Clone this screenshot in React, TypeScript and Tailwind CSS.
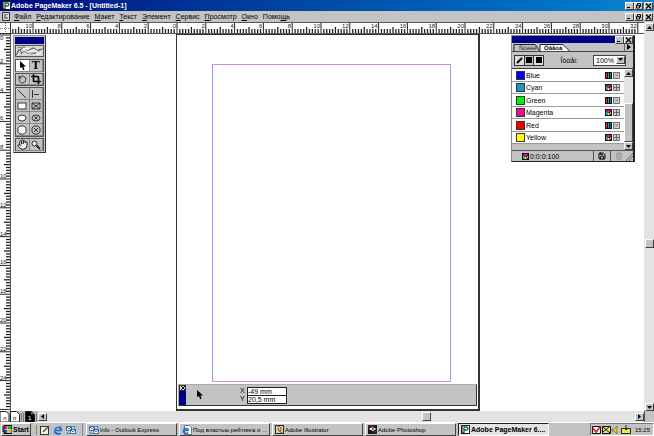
import React from 'react';
import { Hand, Crop, RotateCcw, Trash2, Save } from 'lucide-react';

const UNIT = 144 / 10;

const menuItems = ['Файл', 'Редактирование', 'Макет', 'Текст', 'Элемент', 'Сервис', 'Просмотр', 'Окно', 'Помощь'];

const swatches = [
    { name: 'Blue', color: '#0000f0', process: false },
    { name: 'Cyan', color: '#1899bd', process: true },
    { name: 'Green', color: '#00f010', process: false },
    { name: 'Magenta', color: '#f00890', process: true },
    { name: 'Red', color: '#f80000', process: false },
    { name: 'Yellow', color: '#ffff00', process: true },
];

const raised = 'bg-[#c3c3c3] border border-t-white border-l-white border-r-[#404040] border-b-[#404040]';

const WindowButton = ({ kind }: { kind: 'min' | 'restore' | 'close' }) => (
    <button aria-label={kind} className={`w-[9px] h-[8px] flex items-center justify-center ${raised}`}>
        <svg className="shrink-0" width="7" height="6" viewBox="0 0 7 6" fill="none" stroke="#000">
            {kind === 'min' && <path d="M1 4.5h3" />}
            {kind === 'restore' && <path d="M2.5 2V.5h3v3H4.5M1.5 2.5h3v2.5h-3z" strokeWidth=".9" />}
            {kind === 'close' && <path d="M1 .5l5 5M6 .5l-5 5" strokeWidth="1.1" />}
        </svg>
    </button>
);

const WindowButtons = () => (
    <div className="flex ml-auto pr-px">
        <WindowButton kind="min" />
        <WindowButton kind="restore" />
        <div className="w-px" />
        <WindowButton kind="close" />
    </div>
);

const TopRuler = () => {
    const ticks = [];
    for (let i = -57; i <= 160; i++) {
        const x = 166 + (i * UNIT) / 5;
        const major = i % 10 === 0;
        const len = major ? 11 : i % 5 === 0 ? 6 : 4;
        ticks.push(<path key={i} d={`M${x} ${10 - len}V10`} strokeWidth={major ? 1 : 1.3} />);
    }
    return (
        <svg className="block flex-1 min-w-0 h-[11px] bg-white" stroke="#222">
            {ticks}
            <path d="M0 10.5H2000" stroke="#555" />
            {Array.from({ length: 22 }, (_, k) => k * 2 - 10).map((n) => (
                <text key={n} x={165 + n * UNIT} y="5" textAnchor="end" fontSize="6" fill="#222" stroke="none">
                    {Math.abs(n)}
                </text>
            ))}
        </svg>
    );
};

const SideRuler = () => {
    const ticks = [];
    for (let i = 0; i <= 150; i++) {
        const y = 1 + (i * UNIT) / 5;
        const major = i % 10 === 0;
        const len = major ? 10 : i % 5 === 0 ? 6 : 4;
        ticks.push(<path key={i} d={`M${10 - len} ${y}H10`} strokeWidth={major ? 1 : 1.3} />);
    }
    return (
        <svg className="block w-[11px] h-full bg-white shrink-0" stroke="#222">
            {ticks}
            <path d="M10.5 0V2000" stroke="#555" />
            {Array.from({ length: 13 }, (_, k) => k * 2).map((n) => (
                <text key={n} x="0" y={n === 0 ? 6 : n * UNIT} fontSize="6" fill="#222" stroke="none">
                    {n}
                </text>
            ))}
        </svg>
    );
};

const lineTools = [
    { label: 'Line', shape: <path d="M2 1l8 8" /> },
    { label: 'Constrained line', shape: <path d="M2.5 1v8M4 5.5h5" /> },
    { label: 'Rectangle', shape: <rect x="2" y="2" width="8" height="6" fill="#fff" /> },
    { label: 'Rectangle frame', shape: <path d="M2 2h8v6H2zM2 2l8 6M10 2l-8 6" /> },
    { label: 'Ellipse', shape: <ellipse cx="6" cy="5" rx="4" ry="3" fill="#fff" /> },
    { label: 'Ellipse frame', shape: <><ellipse cx="6" cy="5" rx="4" ry="3" /><path d="M4.5 3.5l3 3M7.5 3.5l-3 3" /></> },
    { label: 'Polygon', shape: <path d="M4 1h4l2 2v4l-2 2H4L2 7V3z" fill="#fff" /> },
    { label: 'Polygon frame', shape: <path d="M4 1h4l2 2v4l-2 2H4L2 7V3zM4 3l4 4M8 3l-4 4" /> },
];

const Tool = ({ label, active, children }: { label: string; active?: boolean; children: React.ReactNode }) => (
    <button
        aria-label={label}
        className={`h-full flex items-center justify-center border-r border-b border-[#888] ${active ? 'bg-white' : 'bg-[#c3c3c3]'}`}
    >
        {children}
    </button>
);

const ToolRow = ({ children }: { children: React.ReactNode }) => (
    <div className="grid grid-cols-2 h-[13px] border border-[#555] mt-px">{children}</div>
);

const Arrow = () => (
    <svg width="7" height="10" viewBox="0 0 7 10">
        <path d="M1 0v7l2-1 1 3h1.5L4.5 5.5H7z" fill="#000" />
    </svg>
);

const Toolbox = () => (
    <div className="absolute left-[2px] top-px w-[33px] bg-[#c3c3c3] border border-[#999] border-r-[#333] border-b-[#333] p-px">
        <div className="h-[7px] bg-[#000080]" />
        <svg className="mt-px mb-[2px] block w-full h-[12px] bg-[#d8d8d8] border border-[#555]" viewBox="0 0 29 11" fill="none" stroke="#333">
            <path d="M0 10l3-6 3 3-2 4M4 4l5-2 4 3 6-3 4 3 6-2" />
            <path d="M5 8l4-2 3 2 5-1 4 1 6-4M1 2l8-1M16 9l8-2" stroke="#777" />
            <path d="M7 3h7M13 6h6M19 4l5 3M2 9l3 1M22 9l5-1" stroke="#fff" strokeWidth="1.5" />
        </svg>
        <ToolRow>
            <Tool label="Pointer" active><Arrow /></Tool>
            <Tool label="Text"><span className="font-['Liberation_Serif',serif] font-bold text-[12px] leading-[11px]">T</span></Tool>
        </ToolRow>
        <ToolRow>
            <Tool label="Rotate"><RotateCcw size={9} strokeDasharray="4 2" /></Tool>
            <Tool label="Crop"><Crop size={10} strokeWidth={4} /></Tool>
        </ToolRow>
        <div className="grid grid-cols-2 grid-rows-4 h-[50px] border border-[#555] mt-px">
            {lineTools.map((tool) => (
                <Tool key={tool.label} label={tool.label}>
                    <svg width="12" height="10" viewBox="0 0 12 10" fill="none" stroke="#222" strokeWidth=".9">
                        {tool.shape}
                    </svg>
                </Tool>
            ))}
        </div>
        <ToolRow>
            <Tool label="Hand"><Hand size={11} fill="#fff" /></Tool>
            <Tool label="Zoom">
                <svg width="10" height="10" viewBox="0 0 10 10" fill="#eee" stroke="#222">
                    <circle cx="3.5" cy="3.5" r="2.5" />
                    <path d="M5.5 5.5L9 9" strokeWidth="1.8" />
                </svg>
            </Tool>
        </ToolRow>
    </div>
);

const ModelIcon = ({ process }: { process: boolean }) => (
    <svg width="7" height="7" viewBox="0 0 7 7">
        <rect width="7" height="7" fill="#111" />
        {process ? (
            <>
                <path d="M1 1h5L3.5 4z" fill="#f0a" />
                <path d="M1 2l2 2-2 2z" fill="#0cf" />
                <path d="M3 4h1l1 2H2z" fill="#ff0" />
                <path d="M6 2v3H5z" fill="#fff" />
            </>
        ) : (
            <>
                <path d="M1 1h1v5H1z" fill="#f22" />
                <path d="M3 1h1v5H3z" fill="#0c4" />
                <path d="M5 1h1v5H5z" fill="#25f" />
            </>
        )}
    </svg>
);

const KindIcon = ({ process }: { process: boolean }) => (
    <svg width="7" height="7" viewBox="0 0 7 7" fill="#ccc" stroke="#555" strokeWidth=".8">
        <rect x=".5" y=".5" width="6" height="6" />
        {process ? <path d="M.5 3.5h6M3.5 .5v6" /> : <path d="M2 2l3 3M5 2L2 5" strokeDasharray="1 1" />}
    </svg>
);

const ScrollButton = ({ dir }: { dir: 'up' | 'down' | 'left' | 'right' }) => (
    <button aria-label={`Scroll ${dir}`} className={`w-[9px] h-[8px] shrink-0 flex items-center justify-center ${raised}`}>
        <svg width="5" height="5" viewBox="0 0 5 5">
            {dir === 'up' && <path d="M0 4h5L2.5 1z" />}
            {dir === 'down' && <path d="M0 1h5L2.5 4z" />}
            {dir === 'left' && <path d="M4 0v5L1 2.5z" />}
            {dir === 'right' && <path d="M1 0v5l3-2.5z" />}
        </svg>
    </button>
);

const ColorPalette = () => (
    <div className="absolute right-[9px] top-px w-[124px] bg-[#c3c3c3] border border-[#888] border-r-[#222] border-b-[#222] border-r-2 text-[7px] leading-[9px]">
        <div className="h-[7px] bg-[#000080] flex justify-end">
            <WindowButton kind="min" />
            <WindowButton kind="close" />
        </div>
        <div className="h-[9px] flex items-stretch border-b border-[#444]">
            <svg className="flex-1 min-w-0 h-[8px]" fill="#c3c3c3" stroke="#222">
                <path d="M2 8V1.5h21l5 7" />
                <path d="M28 8V1.5h23l7 7" fill="#fff" />
                <text x="7" y="7" fontSize="6" fill="#222" stroke="none">Ñòèëè</text>
                <text x="32" y="7" fontSize="6" fontWeight="bold" fill="#000" stroke="none">Öâåòà</text>
            </svg>
            <button aria-label="Palette menu" className="w-[9px] flex items-center justify-center border-l border-[#666]">
                <svg width="4" height="6" viewBox="0 0 4 6"><path d="M0 0v6l4-3z" /></svg>
            </button>
        </div>
        <div className="h-[16px] flex items-center pl-[2px] pr-[7px]">
            <div className="flex h-[11px] border border-[#333]">
                <button aria-label="Stroke" className="w-[9px] flex items-center justify-center bg-[#ddd]">
                    <svg width="7" height="7" viewBox="0 0 7 7"><path d="M1 6l5-5" stroke="#000" strokeWidth="2" /></svg>
                </button>
                <button aria-label="Fill" className="w-[10px] flex items-center justify-center border-x border-[#333]"><span className="size-[6px] bg-black" /></button>
                <button aria-label="Both" className="w-[9px] flex items-center justify-center bg-[#ddd]"><span className="size-[6px] bg-black" /></button>
            </div>
            <label htmlFor="tint" className="ml-auto mr-[15px]">Îòòåí:</label>
            <div className="relative w-[33px] h-[11px]">
                <select id="tint" className="block appearance-none w-full h-[11px] bg-white border border-[#444] leading-[9px] pl-[2px]">
                    <option>100%</option>
                </select>
                <span className="absolute right-px top-px pointer-events-none flex"><ScrollButton dir="down" /></span>
            </div>
        </div>
        <div className="flex border-t border-[#333]">
            <ul className="flex-1 min-w-0 bg-white">
                {swatches.map((s) => (
                    <li key={s.name} className="flex items-center h-[12px] pl-[4px] pr-[4px] border-b border-[#999] odd:h-[13px]">
                        <span className="size-[9px] border border-[#333] mr-px" style={{ backgroundColor: s.color }} />
                        <span>{s.name}</span>
                        <span className="ml-auto flex gap-px">
                            <ModelIcon process={s.process} />
                            <KindIcon process={s.process} />
                        </span>
                    </li>
                ))}
                <li className="h-[6px] bg-[#c3c3c3]" />
            </ul>
            <div className="w-[9px] flex flex-col bg-[#c3c3c3]">
                <ScrollButton dir="up" />
                <div className="h-[26px] bg-[#e3e3e3]" />
                <div className={`flex-1 ${raised}`} />
                <ScrollButton dir="down" />
            </div>
        </div>
        <div className="h-[11px] flex items-center border-t border-[#555] pl-[10px]">
            <ModelIcon process />
            <span className="ml-px">0:0:0:100</span>
            <button aria-label="New color" className="ml-auto w-[18px] h-full flex items-center justify-center border-x border-[#555]"><Save size={8} strokeWidth={3} /></button>
            <button aria-label="Delete color" className="w-[15px] h-full flex items-center justify-center text-[#888]"><Trash2 size={8} /></button>
            <svg width="7" height="9" viewBox="0 0 7 9" stroke="#666"><path d="M0 9l7-8M3 9l4-5" /></svg>
        </div>
    </div>
);

const ControlPalette = () => (
    <div className="absolute left-[167px] top-[350px] w-[299px] h-[22px] bg-[#c3c3c3] border border-[#aaa] border-r-[#333] border-b-[#333] flex items-center">
        <div className="w-[7px] h-[20px] bg-[#000080]">
            <button aria-label="Close palette" className="w-[7px] h-[6px] bg-[#ddd] border border-[#333] flex items-center justify-center">
                <svg width="4" height="4" viewBox="0 0 4 4" stroke="#000"><path d="M0 0l4 4M4 0L0 4" /></svg>
            </button>
        </div>
        <span className="ml-[10px]"><Arrow /></span>
        <div className="ml-[37px] text-[7px] leading-[8px]">
            <div className="flex">
                <label htmlFor="pos-x" className="w-[7px]">X</label>
                <input id="pos-x" defaultValue="-49 mm" className="w-[40px] h-[9px] bg-white border border-[#222] leading-[7px]" />
            </div>
            <div className="flex -mt-px">
                <label htmlFor="pos-y" className="w-[7px]">Y</label>
                <input id="pos-y" defaultValue="20,5 mm" className="w-[40px] h-[9px] bg-white border border-[#222] leading-[7px]" />
            </div>
        </div>
    </div>
);

const PageIcons = () => (
    <svg className="shrink-0" width="38" height="11" viewBox="0 0 38 11" stroke="#222">
        <rect width="38" height="11" fill="#bbb" stroke="none" />
        <path d="M0 .5h6l3 3V11H0zM10.5 .5h6l3 3V11h-9z" fill="#fff" />
        <path d="M21.5 2v9M23.5 2v9M36.5 2v9" stroke="#777" />
        <path d="M25.5 .5h6l3 3V11h-9z" fill="#000" />
        <path d="M31 .5v3h3z" fill="#fff" />
        <g fontSize="6" stroke="none">
            <text x="3" y="9">л</text>
            <text x="13" y="9">п</text>
            <text x="28" y="9" fill="#fff">1</text>
        </g>
    </svg>
);

const OutlookIcon = () => (
    <svg width="10" height="10" viewBox="0 0 10 10" stroke="#124a9c">
        <path d="M.5 1.5h5v4h-5zM4.5 4.5h5v4h-5z" fill="#fff" strokeWidth=".8" />
        <path d="M1 2l2 2 2-2M5 5l2 2 2-2" fill="none" strokeWidth=".8" />
        <path d="M6.5 1.5h2.5v2M1 7v1.5h2.5" fill="none" stroke="#2090d0" />
    </svg>
);

const IeIcon = () => (
    <svg width="10" height="10" viewBox="0 0 10 10" fill="none">
        <path d="M8.5 5.5h-6M8.5 5.5A3.3 3.3 0 1 0 7.5 8" stroke="#1467c8" strokeWidth="1.7" />
        <path d="M1 9C0 6 6 0 9.5 1" stroke="#46a3e8" />
    </svg>
);

const PageIeIcon = () => (
    <svg width="10" height="10" viewBox="0 0 10 10" fill="none">
        <path d="M2.5 .5h5l2 2v7h-7z" fill="#fff" stroke="#777" />
        <path d="M6.5 5.5h-4M6.5 5.5A2.5 2.5 0 1 0 6 7.5" stroke="#1467c8" strokeWidth="1.5" />
    </svg>
);

const IllustratorIcon = () => (
    <svg width="9" height="9" viewBox="0 0 9 9">
        <rect x=".5" y=".5" width="8" height="8" fill="#e5cf9c" stroke="#332b1c" />
        <path d="M2 1c4 0 5 3 3 5M3 3l1 3 3 2" fill="none" stroke="#654725" />
    </svg>
);

const PhotoshopIcon = () => (
    <svg width="9" height="9" viewBox="0 0 9 9">
        <rect width="9" height="9" fill="#181820" />
        <path d="M1 4c2-2 5-2 7 0L5 6z" fill="#fff" />
        <path d="M0 1h6M5 7h4" stroke="#a22" />
        <circle cx="5" cy="4" r="1" fill="#249" />
    </svg>
);

const PageMakerIcon = () => (
    <svg width="9" height="9" viewBox="0 0 9 9" fill="none">
        <rect x=".5" y=".5" width="8" height="8" fill="#fff" stroke="#222" />
        <path d="M3 8V2h2.5a1.5 1.5 0 0 1 0 3H3" stroke="#17683b" strokeWidth="1.3" />
        <path d="M1 1v7h2" stroke="#111" />
    </svg>
);

const tasks = [
    { label: 'info - Outlook Express', icon: <OutlookIcon /> },
    { label: 'Под властью рейтинга и ...', icon: <PageIeIcon /> },
    { label: 'Adobe Illustrator', icon: <IllustratorIcon /> },
    { label: 'Adobe Photoshop', icon: <PhotoshopIcon /> },
    { label: 'Adobe PageMaker 6....', icon: <PageMakerIcon />, active: true },
];

const Taskbar = () => (
    <footer className="h-[14px] shrink-0 flex items-center bg-[#c3c3c3] border-t border-white text-[6px] leading-[10px] pl-px">
        <button className={`w-[30px] h-[13px] flex items-center gap-px text-[7px] leading-[10px] font-bold ${raised}`}>
            <svg className="shrink-0" width="10" height="9" viewBox="0 0 10 9">
                <path d="M0 2h2M0 4h2M0 6h2" stroke="#111" />
                <path d="M2 1c2-1 2 0 3 0v3H2z" fill="#e22" />
                <path d="M6 1c1 1 2 0 4 0v3H6z" fill="#1a4" />
                <path d="M2 5h3v3H2z" fill="#15c" />
                <path d="M6 5h4v3H6z" fill="#eb2" />
                <path d="M2 .5h8v8H2z" fill="none" stroke="#111" />
            </svg>
            Start
        </button>
        <div className="flex items-center gap-[3px] ml-[5px] pl-[3px] border-l border-[#888]">
            <svg width="10" height="10" viewBox="0 0 10 10">
                <rect x=".5" y="1.5" width="8" height="8" fill="#f8f4c8" stroke="#333" />
                <path d="M3 7l6-6" stroke="#357" strokeWidth="1.5" />
            </svg>
            <IeIcon />
            <OutlookIcon />
        </div>
        <nav className="flex flex-1 min-w-0 gap-[2px] ml-[6px] pl-[3px] border-l border-[#888]">
            {tasks.map((t) => (
                <button
                    key={t.label}
                    className={`flex-1 min-w-0 h-[13px] flex items-center gap-px pl-[2px] whitespace-nowrap overflow-hidden ${
                        t.active
                            ? 'bg-[#e3e3e3] text-[7px] leading-[10px] font-bold border border-t-[#222] border-l-[#222] border-r-white border-b-white'
                            : raised
                    }`}
                >
                    <span className="shrink-0">{t.icon}</span>
                    <span>{t.label}</span>
                </button>
            ))}
        </nav>
        <div className="ml-[41px] h-[13px] flex items-center border border-t-[#777] border-l-[#777] border-white pr-[3px]">
            <svg width="42" height="10" viewBox="0 0 42 10">
                <path d="M1.5 1.5h8v7h-8z" fill="#fff" stroke="#111" />
                <path d="M2 3l3 4 4-5" fill="none" stroke="#d22" strokeWidth="1.7" />
                <path d="M11.5 1.5h8v7h-8z" fill="#e9e47c" stroke="#111" />
                <path d="M12 2l7 6M12 7l6-5" stroke="#111" />
                <path d="M21 4h2l3-3v8l-3-3h-2z" fill="#ec3" stroke="#662" strokeWidth=".7" />
                <path d="M30.5 3.5h9v5h-9z" fill="#ee4" stroke="#222" />
                <path d="M35 0v5M33 3l2 2 2-2" fill="none" stroke="#222" />
            </svg>
            <span className="ml-[2px]">15:25</span>
        </div>
    </footer>
);

const App: React.FC = () => {
    return (
        <div className="h-screen flex flex-col overflow-hidden bg-white text-black font-['Liberation_Sans',sans-serif]">
            <header className="h-[11px] shrink-0 flex items-center bg-linear-to-r from-[#000080] to-[#1084d0] text-white pl-[2px]">
                <PageMakerIcon />
                <h1 className="text-[7px] leading-[10px] font-bold">Adobe PageMaker 6.5 - [Untitled-1]</h1>
                <WindowButtons />
            </header>
            <nav className="h-[11px] shrink-0 flex items-center bg-[#c3c3c3] pl-[2px] text-[7px] leading-[9px]">
                <svg width="8" height="9" viewBox="0 0 8 9" fill="#ddd" stroke="#333">
                    <path d="M.5 .5h7v8h-7zM3 2v5M5 2v1M5 5v2" />
                </svg>
                <div className="flex gap-[5px] ml-[4px]">
                    {menuItems.map((m) => (
                        <button key={m} className="whitespace-nowrap">
                            {m === 'Помощь' ? <>Помо<u>щ</u>ь</> : <><u>{m[0]}</u>{m.slice(1)}</>}
                        </button>
                    ))}
                </div>
                <WindowButtons />
            </nav>

            <div className="flex flex-1 min-h-0">
                <div className="flex flex-col flex-1 min-w-0">
                    <div className="flex shrink-0 border-t border-[#555]">
                        <svg className="w-[11px] h-[11px] bg-white shrink-0" stroke="#777">
                            <path d="M5.5 0v11M0 5.5h11" strokeDasharray="1 1" />
                            <path d="M10.5 0v11M0 10.5h11" stroke="#333" />
                        </svg>
                        <TopRuler />
                    </div>
                    <div className="flex flex-1 min-h-0">
                        <SideRuler />
                        <main className="relative flex-1 min-w-0 overflow-hidden bg-white">
                            <div className="absolute left-[165px] top-0 w-[304px] h-[377px] bg-white border border-[#333] border-r-2 border-b-2">
                                <div className="absolute left-[35px] top-[29px] w-[239px] h-[318px] border border-x-[#9a9cf0] border-y-[#d08ce0]" />
                            </div>
                            <Toolbox />
                            <ColorPalette />
                            <ControlPalette />
                        </main>
                    </div>
                </div>
                <div className="w-[10px] shrink-0 flex flex-col items-center bg-[#e3e3e3] pt-px">
                    <ScrollButton dir="up" />
                    <div className="flex-1" />
                    <div className={`w-[9px] h-[9px] ${raised}`} />
                    <div className="h-[155px]" />
                    <ScrollButton dir="down" />
                </div>
            </div>

            <div className="h-[11px] shrink-0 flex items-center bg-[#e3e3e3]">
                <PageIcons />
                <ScrollButton dir="left" />
                <div className="flex-1" />
                <div className={`w-[9px] h-[9px] ${raised}`} />
                <div className="w-[204px]" />
                <ScrollButton dir="right" />
                <div className="w-[10px] h-full bg-[#c3c3c3] border-l border-[#555]" />
            </div>
            <Taskbar />
        </div>
    );
};

export default App;
